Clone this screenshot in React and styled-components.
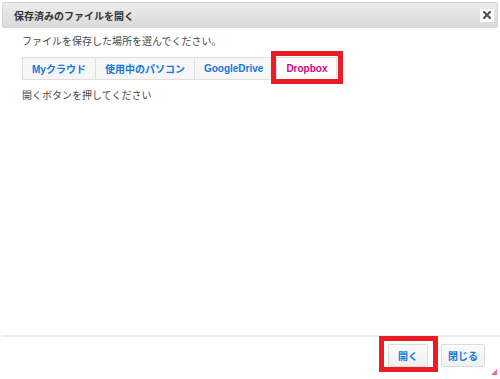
import React, { useState } from "react"
import styled, { createGlobalStyle } from "styled-components"

const GlobalStyle = createGlobalStyle`
	html, body {
		margin: 0;
		padding: 0;
		background: #ffffff;
	}
	body {
		font-family: "Liberation Sans", "Noto Sans CJK JP", sans-serif;
		color: #444444;
	}
`

const places = [
	{ id: "cloud", title: "Myクラウド" },
	{ id: "pc", title: "使用中のパソコン" },
	{ id: "gdrive", title: "GoogleDrive" },
	{ id: "dropbox", title: "Dropbox" },
]

function App() {
	const [active, setActive] = useState("dropbox")

	return (
		<>
			<GlobalStyle />
			<DialogStyled>
				<Header>
					<h1>保存済みのファイルを開く</h1>
					<CloseButton aria-label="close">
						<svg width="8" height="8" viewBox="0 0 8 8">
							<path d="M1 1 L7 7 M7 1 L1 7" stroke="#555" strokeWidth="2.2" strokeLinecap="square" />
						</svg>
					</CloseButton>
				</Header>
				<Body>
					<Message>ファイルを保存した場所を選んでください。</Message>
					<TabRow>
						{places.map((item) => (
							<Tab
								key={item.id}
								$active={active === item.id}
								$marked={item.id === "dropbox"}
								onClick={() => setActive(item.id)}>
								{item.title}
							</Tab>
						))}
					</TabRow>
					<Message $gap="9px">開くボタンを押してください</Message>
				</Body>
				<Footer>
					<Button $marked>開く</Button>
					<Button>閉じる</Button>
				</Footer>
				<ResizeHandle width="6" height="6" viewBox="0 0 6 6">
					<path d="M6 0 L6 6 L0 6 Z" fill="#f062b8" />
				</ResizeHandle>
			</DialogStyled>
		</>
	)
}

const DialogStyled = styled.div`
	position: relative;
	width: 500px;
	height: 379px;
	display: flex;
	flex-direction: column;
	background: #ffffff;
	box-sizing: border-box;
	overflow: hidden;
`

const Header = styled.div`
	margin: 2px 2px 0 2px;
	height: 26px;
	box-sizing: border-box;
	display: flex;
	align-items: center;
	justify-content: space-between;
	padding: 0 3px 0 11px;
	background: linear-gradient(#ececec, #dadada);
	border: 1px solid #d4d4d4;
	border-radius: 2px;

	h1 {
		margin: 0;
		font-size: 10px;
		font-weight: bold;
		color: #333333;
	}
`

const CloseButton = styled.button`
	width: 14px;
	height: 13px;
	padding: 0;
	border: none;
	background: #ffffff;
	display: flex;
	align-items: center;
	justify-content: center;
	cursor: pointer;
`

const Body = styled.div`
	flex: 1;
	padding: 7px 22px 0 22px;
	display: flex;
	flex-direction: column;
	align-items: flex-start;
`

const Message = styled.p`
	margin: ${(p) => p.$gap || "0"} 0 0 0;
	font-size: 10px;
	line-height: 14px;
	color: #4a4a4a;
`

const TabRow = styled.div`
	display: flex;
	margin-top: 8px;
`

const Tab = styled.button`
	position: relative;
	height: 23px;
	padding: 0 9px;
	margin-left: ${(p) => (p.$marked ? "3px" : "0")};
	font-family: inherit;
	font-size: 10px;
	font-weight: bold;
	border: 1px solid #dedede;
	border-left-width: ${(p) => (p.$marked ? "1px" : "0")};
	background: ${(p) => (p.$active ? "#ffffff" : "#f6f6f6")};
	color: ${(p) => (p.$active ? "#e5007f" : "#1577df")};
	cursor: pointer;

	&:first-child {
		border-left-width: 1px;
	}

	${(p) =>
		p.$marked &&
		`
		&::after {
			content: "";
			position: absolute;
			left: -6px;
			right: -7px;
			top: -7px;
			bottom: -5px;
			border: 5px solid #ec1c24;
		}
	`}
`

const Footer = styled.div`
	border-top: 2px solid #ebebeb;
	margin-left: 1px;
	padding: 7px 15px 12px 0;
	display: flex;
	justify-content: flex-end;
	gap: 13px;
`

const Button = styled.button`
	position: relative;
	height: 23px;
	min-width: 40px;
	padding: 0 6px;
	font-family: inherit;
	font-size: 10px;
	font-weight: bold;
	color: #1577df;
	background: linear-gradient(#fbfbfb, #f0f0f0);
	border: 1px solid #dcdcdc;
	border-radius: 2px;
	cursor: pointer;

	${(p) =>
		p.$marked &&
		`
		&::after {
			content: "";
			position: absolute;
			left: -10px;
			right: -11px;
			top: -9px;
			bottom: -6px;
			border: 5px solid #ec1c24;
		}
	`}
`

const ResizeHandle = styled.svg`
	position: absolute;
	right: 3px;
	bottom: 4px;
`

export default App
